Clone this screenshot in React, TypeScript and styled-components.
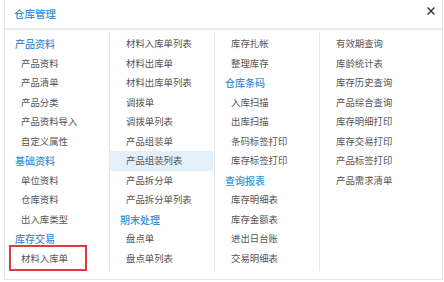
import React from "react";
import styled, { createGlobalStyle } from "styled-components";

const GlobalStyle = createGlobalStyle`
  html, body { margin: 0; padding: 0; background: #ffffff; }
  body { font-family: "Noto Sans CJK SC", "Noto Sans", sans-serif; }
`;

const Panel = styled.div`
  margin-left: 4px;
  width: 437px;
  height: 279px;
  border: 1px solid #e6e6e6;
  border-top: none;
  background: #fff;
  display: flex;
  flex-direction: column;
  box-sizing: content-box;
`;

const Header = styled.div`
  height: 28px;
  border-bottom: 2px solid #ececec;
  display: flex;
  align-items: center;
  justify-content: space-between;
  padding: 0 6px 0 9px;
`;

const Title = styled.div`
  font-size: 10.5px;
  color: #3a8ed6;
  font-weight: 500;
  margin-top: -1px;
`;

const Close = styled.div`
  width: 10px;
  height: 10px;
  margin-top: -6px;
  display: flex;
  align-items: center;
  justify-content: center;
`;

const Columns = styled.div`
  display: grid;
  grid-template-columns: 105px 105px 105px 1fr;
  padding-top: 2px;
  flex: 1;
  min-height: 0;
`;

const Column = styled.div<{ $last?: boolean }>`
  display: flex;
  flex-direction: column;
  padding: 2px 0 0;
  margin-bottom: 8px;
  border-right: ${(p) => (p.$last ? "none" : "1px solid #e6e6e6")};
`;

const Heading = styled.div`
  height: 19.5px;
  line-height: 19.5px;
  padding-left: 10px;
  font-size: 10px;
  color: #3a8ed6;
  font-weight: 500;
  white-space: nowrap;
`;

const Item = styled.div<{ $active?: boolean }>`
  position: relative;
  height: 19.5px;
  line-height: 19.5px;
  padding-left: 16px;
  font-size: 9.4px;
  color: #555;
  white-space: nowrap;
  background: ${(p) => (p.$active ? "#e4f0f9" : "transparent")};
  margin-right: ${(p) => (p.$active ? "1px" : "0")};
`;

const Marker = styled.div`
  position: absolute;
  left: 4px;
  top: -4px;
  width: 74px;
  height: 22px;
  border: 2px solid #e0393e;
  pointer-events: none;
`;

type Entry = { h?: string; t?: string; active?: boolean; mark?: boolean };

const cols: Entry[][] = [
  [
    { h: "产品资料" },
    { t: "产品资料" },
    { t: "产品清单" },
    { t: "产品分类" },
    { t: "产品资料导入" },
    { t: "自定义属性" },
    { h: "基础资料" },
    { t: "单位资料" },
    { t: "仓库资料" },
    { t: "出入库类型" },
    { h: "库存交易" },
    { t: "材料入库单", mark: true },
  ],
  [
    { t: "材料入库单列表" },
    { t: "材料出库单" },
    { t: "材料出库单列表" },
    { t: "调拨单" },
    { t: "调拨单列表" },
    { t: "产品组装单" },
    { t: "产品组装列表", active: true },
    { t: "产品拆分单" },
    { t: "产品拆分单列表" },
    { h: "期末处理" },
    { t: "盘点单" },
    { t: "盘点单列表" },
  ],
  [
    { t: "库存扎帐" },
    { t: "整理库存" },
    { h: "仓库条码" },
    { t: "入库扫描" },
    { t: "出库扫描" },
    { t: "条码标签打印" },
    { t: "库存标签打印" },
    { h: "查询报表" },
    { t: "库存明细表" },
    { t: "库存金额表" },
    { t: "进出日台账" },
    { t: "交易明细表" },
  ],
  [
    { t: "有效期查询" },
    { t: "库龄统计表" },
    { t: "库存历史查询" },
    { t: "产品综合查询" },
    { t: "库存明细打印" },
    { t: "库存交易打印" },
    { t: "产品标签打印" },
    { t: "产品需求清单" },
  ],
];

export default function App() {
  return (
    <>
      <GlobalStyle />
      <Panel>
        <Header>
          <Title>仓库管理</Title>
          <Close>
            <svg width="8" height="8" viewBox="0 0 8 8">
              <path d="M0.6 0.6 L7.4 7.4 M7.4 0.6 L0.6 7.4" stroke="#333" strokeWidth="1.4" />
            </svg>
          </Close>
        </Header>
        <Columns>
          {cols.map((col, i) => (
            <Column key={i} $last={i === cols.length - 1}>
              {col.map((e, j) =>
                e.h ? (
                  <Heading key={j}>{e.h}</Heading>
                ) : (
                  <Item key={j} $active={e.active}>
                    {e.t}
                    {e.mark && <Marker />}
                  </Item>
                )
              )}
            </Column>
          ))}
        </Columns>
      </Panel>
    </>
  );
}
